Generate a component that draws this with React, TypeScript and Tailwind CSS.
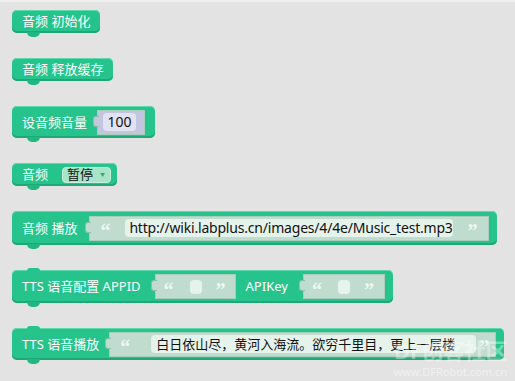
import React from 'react';

const font = { fontFamily: '"Noto Sans", "Noto Sans CJK SC", sans-serif' };

const Block = ({ children, topTab = false, h }: { children: React.ReactNode; topTab?: boolean; h: string }) => (
  <div className={`relative self-start flex items-center bg-[#26c48c] rounded-[5px] pl-[10px] pr-[8px] ${h} shadow-[inset_0_-2px_0_#1fa877,inset_0_1px_0_#5fd8ad]`}>
    {topTab && <div className="absolute left-[15px] -top-[2px] w-[13px] h-[3px] bg-[#26c48c] rounded-t-[3px]" />}
    <div className="absolute left-[15px] -bottom-[4px] w-[13px] h-[5px] bg-[#22b782] rounded-b-[5px]" />
    {children}
  </div>
);

const Label = ({ children, className = '' }: { children: React.ReactNode; className?: string }) => (
  <span className={`text-white text-[13px] leading-none whitespace-nowrap ${className}`}>{children}</span>
);

const Socket = ({ children, className = '', color = 'bg-[#bfdccf]' }: { children: React.ReactNode; className?: string; color?: string }) => (
  <div className={`relative flex items-center h-[25px] ${color} border border-[#a9cdbc] ${className}`}>
    <div className={`absolute -left-[5px] top-[5px] w-[6px] h-[11px] rounded-l-[3px] ${color} border border-r-0 border-[#8fbfa9]`} />
    {children}
  </div>
);

const Quote = ({ children, className = '' }: { children: React.ReactNode; className?: string }) => (
  <span
    className={`text-[#eef8f3] text-[20px] font-bold leading-none h-[12px] overflow-visible -translate-y-[1px] ${className}`}
    style={{ fontFamily: '"Liberation Serif", serif' }}
  >
    {children}
  </span>
);

const Field = ({ children, className = '' }: { children?: React.ReactNode; className?: string }) => (
  <div className={`flex items-center rounded-[4px] bg-[#e6f3ec] text-[13px] text-[#111] leading-none whitespace-nowrap ${className}`}>
    {children}
  </div>
);

export default function App() {
  return (
    <div className="w-[515px] h-[381px] bg-[#e3e3e3] border-t-2 border-[#eeeeee] overflow-hidden relative" style={font}>
      <div className="flex flex-col pl-[12px] pt-[8px] gap-[25px]">
        <Block h="h-[23px]">
          <Label className="pr-[2px]">音频 初始化</Label>
        </Block>
        <Block h="h-[23px]">
          <Label className="pr-[2px]">音频 释放缓存</Label>
        </Block>
        <Block h="h-[32px]">
          <Label>设音频音量</Label>
          <Socket className="ml-[10px] w-[48px] mr-[2px]" color="bg-[#c4c5de]">
            <div className="ml-[5px] flex items-center justify-center w-[33px] h-[18px] rounded-[4px] bg-[#e2e3f2] text-[14px] text-[#111] leading-none">100</div>
          </Socket>
        </Block>
        <Block h="h-[23px]">
          <Label>音频</Label>
          <div className="ml-[14px] mr-[-2px] flex items-center h-[16px] w-[49px] rounded-[4px] bg-[#a7e5c9] border border-[#c9f0de] pl-[4px] text-[13px] text-[#111] leading-none">
            暂停
            <span className="ml-[7px] text-[5px] text-[#3aa57d]">▼</span>
          </div>
        </Block>
        <Block h="h-[34px]">
          <Label>音频 播放</Label>
          <Socket className="ml-[12px] w-[400px]">
            <Quote className="ml-[10px]">“</Quote>
            <Field className="ml-[15px] h-[18px] w-[328px] pl-[4px] text-[14px] tracking-[-0.2px]">http://wiki.labplus.cn/images/4/4e/Music_test.mp3</Field>
            <Quote className="ml-[14px]">”</Quote>
          </Socket>
        </Block>
        <Block h="h-[33px]" topTab>
          <Label>TTS 语音配置 APPID</Label>
          <Socket className="ml-[14px] w-[81px]">
            <Quote className="ml-[8px]">“</Quote>
            <Field className="ml-[16px] w-[12px] h-[14px] rounded-[3px]" />
            <Quote className="ml-[14px]">”</Quote>
          </Socket>
          <Label className="ml-[10px]">APIKey</Label>
          <Socket className="ml-[15px] w-[82px]">
            <Quote className="ml-[8px]">“</Quote>
            <Field className="ml-[16px] w-[12px] h-[14px] rounded-[3px]" />
            <Quote className="ml-[14px]">”</Quote>
          </Socket>
        </Block>
        <Block h="h-[32px]" topTab>
          <Label>TTS 语音播放</Label>
          <Socket className="ml-[10px] w-[387px]">
            <Quote className="ml-[10px]">“</Quote>
            <Field className="ml-[21px] h-[18px] w-[325px] pl-[5px]">白日依山尽，黄河入海流。欲穷千里目，更上一层楼</Field>
            <Quote className="ml-[3px]">”</Quote>
          </Socket>
        </Block>
      </div>
      <div className="absolute right-[8px] bottom-[20px] text-[22px] font-bold text-white/40 leading-none tracking-tight">DF创客社区</div>
      <div className="absolute right-[8px] bottom-[4px] text-[11px] text-white/50 leading-none">www.DFRobot.com.cn</div>
    </div>
  );
}
